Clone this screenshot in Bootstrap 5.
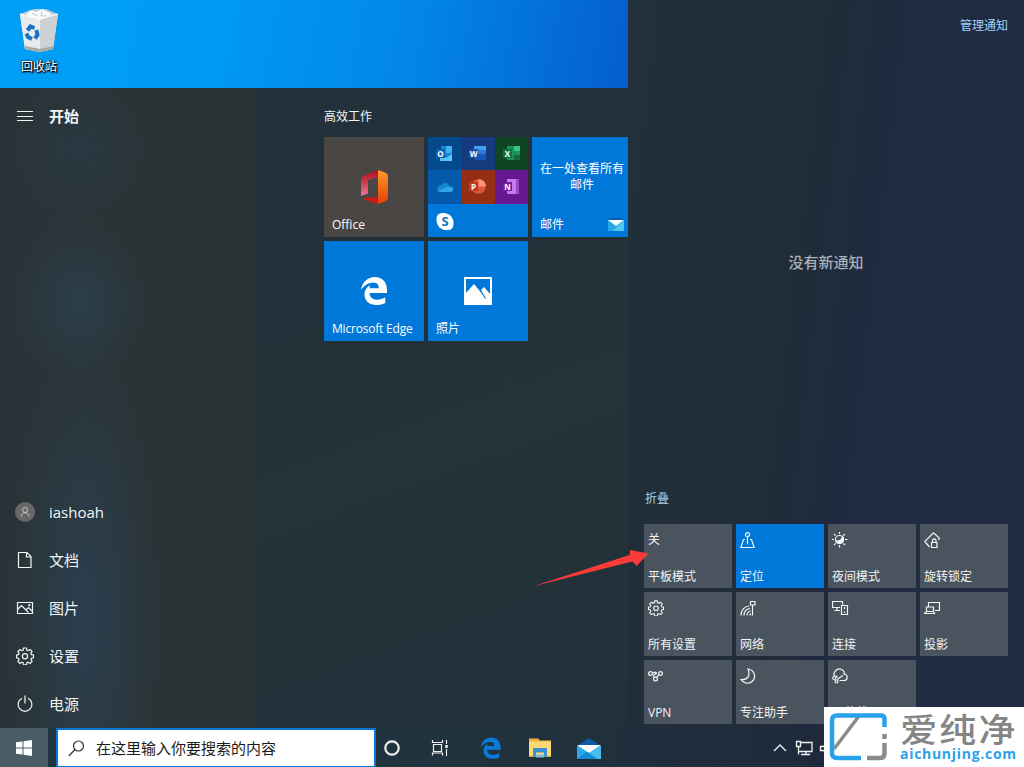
<!DOCTYPE html>
<html lang="zh-CN">

<head>
    <meta charset="UTF-8">
    <meta name="viewport" content="width=device-width, initial-scale=1.0">
    <title>Windows 10 桌面</title>
    <link href="https://cdn.jsdelivr.net/npm/bootstrap@5.3.0/dist/css/bootstrap.min.css" rel="stylesheet">
    <style>
        body {
            width: 1024px;
            height: 767px;
            background-color: #22303a;
            font-family: "Open Sans", "Noto Sans CJK SC", sans-serif;
            font-size: 12px;
            line-height: 16px;
            color: #f2f5f6;
        }

        svg {
            display: block;
            flex-shrink: 0;
        }

        .line-icon {
            fill: none;
            stroke: #f2f5f6;
            stroke-width: 1.2;
        }

        .left-side {
            width: 628px;
        }

        /* Wallpaper */
        .wallpaper {
            height: 88px;
            background: linear-gradient(101deg, #009ff5 0%, #009bf3 32%, #0286e8 65%, #0464d4 94%, #045dcd 100%);
        }

        .desktop-icon {
            width: 78px;
            padding-top: 8px;
        }

        .desktop-icon span {
            margin-top: 6px;
            color: #fff;
            text-shadow: 1px 1px 2px #000, 0 0 2px #000, 1px 1px 1px #000;
        }

        /* Start menu */
        .start-list {
            width: 256px;
            padding-top: 4px;
            font-size: 15px;
            background:
                radial-gradient(ellipse 65px 80px at 80px 215px, rgba(42, 70, 88, .6), rgba(42, 70, 88, 0)),
                radial-gradient(ellipse 75px 280px at 85px 530px, rgba(42, 68, 88, .7), rgba(42, 68, 88, 0)),
                radial-gradient(ellipse 65px 70px at 80px 60px, rgba(38, 62, 76, .5), rgba(38, 62, 76, 0)),
                linear-gradient(90deg, #2a3438, #2b3337 60%, #2b3235);
        }

        .start-row {
            height: 48px;
            padding-left: 16px;
            gap: 15px;
        }

        .start-tiles {
            width: 372px;
            padding: 21px 0 0 68px;
            overflow: hidden;
            background: linear-gradient(160deg, #22303b 0%, #243339 55%, #22303a 100%);
        }

        .tile-grid {
            display: grid;
            grid-template-columns: repeat(3, 100px);
            grid-auto-rows: 100px;
            gap: 4px;
            margin-top: 12px;
        }

        .app-tile {
            position: relative;
            background-color: #0078d9;
            color: #fff;
        }

        .app-tile > .tile-name {
            position: absolute;
            left: 8px;
            bottom: 4px;
            white-space: nowrap;
        }

        .tile-edge > .tile-name {
            letter-spacing: -.2px;
        }

        .tile-office {
            background-color: #494644;
        }

        .tile-icon {
            padding-top: 32px;
        }

        .mail-badge {
            position: absolute;
            left: 76px;
            top: 80px;
        }

        .folder-cells {
            display: grid;
            grid-template-columns: 33px 34px 33px;
            grid-template-rows: 33px 34px 33px;
        }

        .cell-outlook { background-color: #03498c; }
        .cell-word { background-color: #153a7d; }
        .cell-excel { background-color: #0f4425; }
        .cell-onedrive { background-color: #0359ac; }
        .cell-point { background-color: #942f16; }
        .cell-note { background-color: #65188f; }

        .logo-letter {
            font: bold 8px "Open Sans", sans-serif;
            fill: #fff;
            text-anchor: middle;
        }

        /* Action center */
        .action-center {
            width: 396px;
            padding: 18px 16px 4px;
            background: linear-gradient(97deg, #22303a 0%, #202c38 40%, #202a40 58%, #202a42 100%);
        }

        .action-link {
            color: #a3d3f7;
        }

        .no-news {
            margin-top: 220px;
            font-size: 15px;
            font-weight: 500;
            color: #aab0b8;
        }

        .fold-link {
            margin: 221px 0 17px 1px;
        }

        .quick-grid {
            display: grid;
            grid-template-columns: repeat(4, 88px);
            grid-auto-rows: 64px;
            gap: 4px;
        }

        .quick-tile {
            padding: 8px 4px 3px;
            background-color: #4a545f;
        }

        .quick-on {
            background-color: #0078d9;
        }

        /* Taskbar */
        .taskbar {
            height: 39px;
            background: linear-gradient(90deg, #21343f, #20323c 50%, #1e2a3c 80%, #1e2942);
        }

        .start-button {
            width: 48px;
            background-color: #4a5c65;
        }

        .search-box {
            width: 320px;
            margin-left: 8px;
            padding-left: 10px;
            gap: 11px;
            background-color: #fff;
            border: 2px solid #0a74cf;
            border-bottom-width: 1px;
            color: #1b1b1b;
            font-size: 15px;
        }

        .tray-icons {
            padding-left: 160px;
        }

        /* Layers over the desktop */
        .pointer-arrow {
            position: absolute;
            left: 530px;
            top: 545px;
        }

        .site-stamp {
            position: absolute;
            left: 824px;
            top: 707px;
            background-color: #fff;
        }
    </style>
</head>

<body class="position-relative overflow-hidden d-flex flex-column">

    <main class="d-flex flex-grow-1">
        <div class="left-side d-flex flex-column">

            <!-- Desktop -->
            <div class="wallpaper">
                <div class="desktop-icon d-flex flex-column align-items-center">
                    <svg width="40" height="45" viewBox="0 0 40 45">
                        <path d="M1 6 L7 4 L12 2 L18 1 L27 2 L31 4 L39 6 L34 41 L21 44 L6 41Z" fill="#dcdfe1" />
                        <path d="M1 6 L21 11 L21 44 L6 41Z" fill="#e9ebec" />
                        <path d="M21 11 L39 6 L34 41 L21 44Z" fill="#cfd2d4" />
                        <path d="M1 6 L12 2 L27 1 L39 6 L21 11Z" fill="#b8cbd8" />
                        <path d="M7 6 L13 2 L17 4 L23 1 L29 4 L33 6 L29 9 L21 12 L11 9Z" fill="#f8f9f9" />
                        <path d="M13 5 L18 8 M23 3 L22 8 L28 8" fill="none" stroke="#c3c7c9" />
                        <path d="M1 6 L21 11 L39 6" fill="none" stroke="#fff" />
                        <path d="M6 38 L21 41 L34.500 38 L34 41 L21 44 L6.500 41Z" fill="#aaa9a7" />
                        <g fill="none" stroke="#1972c6" stroke-width="4">
                            <path d="M8.500 22.500 L11.500 18.500 L15.500 20" />
                            <path d="M17.500 22 L18.500 27 L16 30.500" />
                            <path d="M13 31 L9 29 L7.500 25.500" />
                        </g>
                    </svg>
                    <span>回收站</span>
                </div>
            </div>

            <!-- Start menu -->
            <div class="d-flex flex-grow-1">
                <nav class="start-list d-flex flex-column">
                    <div class="start-row d-flex align-items-center mb-auto fw-bold">
                        <svg class="line-icon" width="18" height="18" viewBox="0 0 18 18"><path d="M1 4.500h16M1 9.500h16M1 13.500h16" /></svg>
                        <span>开始</span>
                    </div>
                    <div class="start-row d-flex align-items-center">
                        <svg width="18" height="20" viewBox="0 0 18 20" overflow="visible">
                            <circle cx="9" cy="10" r="10" fill="#696767" />
                            <circle cx="9" cy="8" r="2.500" fill="none" stroke="#c6c6c6" />
                            <path d="M5 14.500c0-5 8-5 8 0" fill="none" stroke="#c6c6c6" />
                        </svg>
                        <span>iashoah</span>
                    </div>
                    <div class="start-row d-flex align-items-center">
                        <svg class="line-icon" width="18" height="18" viewBox="0 0 18 18"><path d="M2.500 1.500h8.500l4 4v11h-12.500zM10.500 1.500v4.500h4.500" /></svg>
                        <span>文档</span>
                    </div>
                    <div class="start-row d-flex align-items-center">
                        <svg class="line-icon" width="18" height="18" viewBox="0 0 18 18"><path d="M1.500 3.500h15v11h-15zM1.500 10.500l4-4 7 7M10 11l2.500-2.500 4 4" /><circle cx="13.300" cy="6.200" r=".5" /></svg>
                        <span>图片</span>
                    </div>
                    <div class="start-row d-flex align-items-center">
                        <svg class="line-icon" width="18" height="18" viewBox="0 0 18 18">
                            <path d="M7.500 1h3l.4 2.200 1.300.5 1.900-1.200 2 2-1.200 1.900.5 1.200 2.100.4v2.800l-2.100.5-.5 1.200 1.200 1.900-2 2-1.900-1.200-1.300.5-.4 2.200h-3l-.4-2.200-1.300-.5-1.900 1.200-2-2 1.200-1.900-.5-1.200-2.100-.5v-2.800l2.100-.4.5-1.200-1.200-1.900 2-2 1.900 1.200 1.300-.5z" />
                            <circle cx="9" cy="9.300" r="2.600" />
                        </svg>
                        <span>设置</span>
                    </div>
                    <div class="start-row d-flex align-items-center">
                        <svg class="line-icon" width="18" height="18" viewBox="0 0 18 18"><path d="M6 3.200a6.900 6.900 0 1 0 6 0M9 .5v8" /></svg>
                        <span>电源</span>
                    </div>
                </nav>

                <section class="start-tiles">
                    <div>高效工作</div>
                    <div class="tile-grid">
                        <div class="app-tile tile-office">
                            <div class="tile-icon d-flex justify-content-center">
                                <svg width="28" height="36" viewBox="0 0 28 36">
                                    <defs>
                                        <linearGradient id="officeLeft" x1="0" y1="0" x2="0" y2="1">
                                            <stop offset="0" stop-color="#a80f18" />
                                            <stop offset=".5" stop-color="#cf3f55" />
                                            <stop offset="1" stop-color="#e77aa4" />
                                        </linearGradient>
                                        <linearGradient id="officeRight" x1="0" y1="0" x2="0" y2="1">
                                            <stop offset="0" stop-color="#ff9a2c" />
                                            <stop offset="1" stop-color="#e33e05" />
                                        </linearGradient>
                                    </defs>
                                    <path d="M18 1 L4 6.500 Q1 8 1 12 V27 L8 24.500 V11 L18 8Z" fill="url(#officeLeft)" />
                                    <path d="M5 28 L18 28.500 V35 L15 34.500 L4 30Z" fill="#c91c18" />
                                    <path d="M18 1 L25 3.500 Q28 4.500 28 8 V28 Q28 31 25 32.500 L18 35Z" fill="url(#officeRight)" />
                                </svg>
                            </div>
                            <span class="tile-name">Office</span>
                        </div>

                        <div class="app-tile folder-cells">
                            <svg class="cell-outlook" width="33" height="33" viewBox="0 0 33 33">
                                <path d="M13 9h11v15H13z" fill="#1687d4" /><path d="M18 9h6v7h-6z" fill="#3eb4ee" /><path d="M12 17l6 4 6-4v7H12z" fill="#58c5f5" />
                                <path d="M8 12h9v9H8z" fill="#0c62b4" /><text class="logo-letter" x="12.500" y="19.500">O</text>
                            </svg>
                            <svg class="cell-word" width="34" height="33" viewBox="0 0 34 33">
                                <path d="M13 9h12v4H13z" fill="#44a0ee" /><path d="M13 13h12v4H13z" fill="#2c7bd4" /><path d="M13 17h12v6H13z" fill="#1957b4" />
                                <path d="M8 12h9v9H8z" fill="#1a51a8" /><text class="logo-letter" x="12.500" y="19.500">W</text>
                            </svg>
                            <svg class="cell-excel" width="33" height="33" viewBox="0 0 33 33">
                                <path d="M12 9h13v14H12z" fill="#1b9355" /><path d="M19 9h6v5h-6z" fill="#36c781" /><path d="M19 18h6v5h-6z" fill="#17693d" />
                                <path d="M8 12h9v9H8z" fill="#0d7540" /><text class="logo-letter" x="12.500" y="19.500">X</text>
                            </svg>
                            <svg class="cell-onedrive" width="33" height="34" viewBox="0 0 33 34">
                                <path d="M9 19c0-3 3-4 5-4 2-4 7-2 7 1 3 0 4 1 4 3q0 3-3 3H12q-3 0-3-3z" fill="#1387d3" /><path d="M10 21l9-4q6-1 6 2 0 3-3 3H12z" fill="#2da5e6" />
                            </svg>
                            <svg class="cell-point" width="34" height="34" viewBox="0 0 34 34">
                                <circle cx="17.500" cy="16.500" r="7.300" fill="#dc5836" /><path d="M17.500 16.500V9.200a7.300 7.300 0 0 1 7.300 7.300z" fill="#ff9477" />
                                <path d="M8 12h9v9H8z" fill="#bd3c20" /><text class="logo-letter" x="12.500" y="19.500">P</text>
                            </svg>
                            <svg class="cell-note" width="33" height="34" viewBox="0 0 33 34">
                                <path d="M12 9h12v15H12z" fill="#c67be8" /><path d="M21 9h3v15h-3z" fill="#9d49ca" />
                                <path d="M8 12h9v9H8z" fill="#7b1ca6" /><text class="logo-letter" x="12.500" y="19.500">N</text>
                            </svg>
                            <svg width="33" height="33" viewBox="0 0 33 33">
                                <rect x="8.500" y="9" width="13" height="13" rx="5.500" fill="#fff" /><rect x="12" y="12.500" width="13.500" height="13.500" rx="5.500" fill="#fff" /><circle cx="17" cy="17.500" r="8" fill="#fff" />
                                <text x="17" y="22.300" text-anchor="middle" font-size="13" font-weight="700" fill="#0b75bf">S</text>
                            </svg>
                        </div>

                        <div class="app-tile text-center pt-4">
                            <div>在一处查看所有<br>邮件</div>
                            <span class="tile-name">邮件</span>
                            <svg class="mail-badge" width="16" height="14" viewBox="0 0 16 14">
                                <path d="M0 3h16v11H0z" fill="#25a8e5" /><path d="M0 3h16L8 9z" fill="#f5fbfe" /><path d="M0 3l3-2h10l3 2z" fill="#0d5aa4" /><path d="M16 3v11H5z" fill="#54c7f0" />
                            </svg>
                        </div>

                        <div class="app-tile tile-edge">
                            <div class="d-flex justify-content-center pt-4">
                                <svg class="mt-3" width="28" height="28" viewBox="0 0 28 28" overflow="visible">
                                    <path transform="translate(0 -4)" fill="#fff" d="M1 13C2 5 8 0 15 0c7 0 12 5 12 12.500V16H9.500c.3 4.500 3.500 6.800 7.500 6.800 3.300 0 6-1 8.300-2.500V26c-2.800 1.500-5.800 2-8.800 2-7 0-12-4-12-10.500 0-4.300 2.300-7.500 6-9.300-.7 1-1 2-1.100 3h9.400c0-3.400-1.600-5.400-5.300-5.400C8 5.800 4 8.500 1 13z" />
                                </svg>
                            </div>
                            <span class="tile-name">Microsoft Edge</span>
                        </div>

                        <div class="app-tile">
                            <div class="d-flex justify-content-center pt-4">
                                <svg class="mt-3" width="28" height="28" viewBox="0 0 28 28" overflow="visible">
                                    <g transform="translate(0 -4)"><path d="M1 1h26v26H1z" fill="none" stroke="#fff" stroke-width="2" /><path d="M1 17L10 7l9 11-2-5 3-3 7 8v9H1z" fill="#fff" /><path d="M16.500 13.500l5 8" stroke="#0078d9" stroke-width="1.100" /></g>
                                </svg>
                            </div>
                            <span class="tile-name">照片</span>
                        </div>
                    </div>
                </section>
            </div>
        </div>

        <!-- Action center -->
        <aside class="action-center">
            <div class="action-link text-end">管理通知</div>
            <div class="no-news text-center">没有新通知</div>
            <div class="fold-link action-link">折叠</div>
            <div class="quick-grid">
                <div class="quick-tile d-flex flex-column justify-content-between">
                    <span>关</span>
                    <span>平板模式</span>
                </div>
                <div class="quick-tile quick-on d-flex flex-column justify-content-between">
                    <svg class="line-icon" width="16" height="17" viewBox="0 0 16 17"><circle cx="7.500" cy="2.700" r="2" /><path d="M7.500 4.700v7.500M5 7.500H3.500L.8 15.500h13.400L11.500 7.500H10" /></svg>
                    <span>定位</span>
                </div>
                <div class="quick-tile d-flex flex-column justify-content-between">
                    <svg class="line-icon" width="16" height="16" viewBox="0 0 16 16">
                        <path d="M7.500 0v2M7.500 13v2.500M0 7.500h2M13 7.500h2.500M2 2l1.700 1.700M13 2l-1.700 1.700M2 13l1.700-1.700M13 13l-1.700-1.700" /><circle cx="7.500" cy="7.500" r="4" /><path d="M10.500 4.500a4 4 0 1 1-6.500 4.500c3 .5 6-1 6.500-4.500z" fill="#f2f5f6" />
                    </svg>
                    <span>夜间模式</span>
                </div>
                <div class="quick-tile d-flex flex-column justify-content-between">
                    <svg class="line-icon" width="17" height="17" viewBox="0 0 17 17"><path d="M5.500 15L.8 9.500 9.500.8l6 5.500-1.200 1.700M2.500 11.500l3 3.500" /><path d="M7.500 10.500h5.500v5h-5.500zM8.500 10.500v-2c0-2.300 3.500-2.300 3.500 0v2" /></svg>
                    <span>旋转锁定</span>
                </div>
                <div class="quick-tile d-flex flex-column justify-content-between">
                    <svg class="line-icon" width="16" height="16" viewBox="0 0 18 18">
                        <path d="M7.500 1h3l.4 2.200 1.300.5 1.900-1.200 2 2-1.200 1.900.5 1.200 2.100.4v2.800l-2.100.5-.5 1.200 1.200 1.900-2 2-1.900-1.200-1.300.5-.4 2.200h-3l-.4-2.200-1.300-.5-1.900 1.200-2-2 1.200-1.900-.5-1.200-2.100-.5v-2.800l2.100-.4.5-1.200-1.200-1.900 2-2 1.900 1.200 1.300-.5z" />
                        <circle cx="9" cy="9.300" r="2.600" />
                    </svg>
                    <span>所有设置</span>
                </div>
                <div class="quick-tile d-flex flex-column justify-content-between">
                    <svg class="line-icon" width="17" height="17" viewBox="0 0 17 17"><path d="M1 15.500C1 10 5 6 9.500 6M4 15.500c0-4 2.500-6.500 6-7M7 15.500c0-2.500 1.500-4 3.500-4.500M10 15.500q0-1.500 1-2M12.500 5v10.500M10.500 1.500h4.500v3.500h-4.500z" /></svg>
                    <span>网络</span>
                </div>
                <div class="quick-tile d-flex flex-column justify-content-between">
                    <svg class="line-icon" width="17" height="17" viewBox="0 0 17 17"><path d="M8 7.500H.5v-6h10v3M5 7.500v3M2.500 10.500H8M9.500 5.500h6v9h-6zM12.500 7v2M12.500 11.500v1.500" /></svg>
                    <span>连接</span>
                </div>
                <div class="quick-tile d-flex flex-column justify-content-between">
                    <svg class="line-icon" width="17" height="17" viewBox="0 0 17 17"><path d="M4.500 6.500v-4h11v8H11M2.500 7h7v4.500h-7zM2.500 11.500l-2 2h10l-1-2" /></svg>
                    <span>投影</span>
                </div>
                <div class="quick-tile d-flex flex-column justify-content-between">
                    <svg class="line-icon" width="16" height="16" viewBox="0 0 16 16"><circle cx="2.500" cy="5.500" r="1.900" /><circle cx="12.500" cy="5.500" r="1.900" /><circle cx="7.500" cy="11" r="1.900" /><path d="M4.400 5.500L7 4l1.500 2.500M5 7l1.500 2.300M8.500 9.300l2.500-2.500M6 7l3-2.500" /></svg>
                    <span>VPN</span>
                </div>
                <div class="quick-tile d-flex flex-column justify-content-between">
                    <svg class="line-icon" width="17" height="17" viewBox="0 0 17 17"><path d="M8 1c7 1 8.500 9 4 12.500-3.500 3-8.500 2-11-2C8 12.500 10.500 7 8 1z" /></svg>
                    <span>专注助手</span>
                </div>
                <div class="quick-tile d-flex flex-column justify-content-between">
                    <svg class="line-icon" width="17" height="17" viewBox="0 0 17 17"><path d="M2.500 8.500c-2-4 2.500-9 7-7 3 1 3 4 2.500 4.500 4.500.5 4 6.500 0 6.500H7.500M5 11.500l6-4M5.500 9.500l-2-2" /><circle cx="2.200" cy="10" r="1.500" /><circle cx="4.500" cy="13.500" r="1.500" /></svg>
                    <span>屏幕截图</span>
                </div>
            </div>
        </aside>
    </main>

    <!-- Taskbar -->
    <footer class="taskbar d-flex">
        <div class="start-button d-flex align-items-center justify-content-center">
            <svg width="16" height="16" viewBox="0 0 16 16"><path fill="#fff" d="M0 2.300l6.500-.9v6.100H0zM7.500 1.200L16 0v7.500H7.500zM0 8.500h6.500v6.100L0 13.700zM7.500 8.500H16V16l-8.500-1.200z" /></svg>
        </div>
        <div class="search-box d-flex align-items-center">
            <svg width="17" height="17" viewBox="0 0 17 17" fill="none" stroke="#333" stroke-width="1.200"><circle cx="10.500" cy="6" r="5" /><path d="M7 9.500L.8 16" /></svg>
            <span>在这里输入你要搜索的内容</span>
        </div>
        <div class="d-flex">
            <svg width="40" height="39" viewBox="0 0 40 39"><circle cx="16" cy="20" r="6.700" fill="none" stroke="#eef1f2" stroke-width="2.200" /></svg>
            <svg width="48" height="39" viewBox="0 0 48 39" fill="none" stroke="#eef1f2" stroke-width="1.200"><path d="M16.500 12v2.500h10V12M17.500 16.500h8v7h-8zM16.500 27.500v-2.500h10v2.500M30.500 12v4M30.500 21v7" /><path d="M30.500 17v3" stroke-width="2.500" /></svg>
            <svg width="54" height="39" viewBox="0 0 54 39"><path transform="translate(16 9.500) scale(.76)" fill="#0b7add" d="M1 13C2 5 8 0 15 0c7 0 12 5 12 12.500V16H9.500c.3 4.500 3.500 6.800 7.500 6.800 3.300 0 6-1 8.300-2.500V26c-2.800 1.500-5.800 2-8.800 2-7 0-12-4-12-10.500 0-4.300 2.300-7.500 6-9.300-.7 1-1 2-1.100 3h9.400c0-3.400-1.600-5.400-5.300-5.400C8 5.800 4 8.500 1 13z" /></svg>
            <svg width="44" height="39" viewBox="0 0 44 39">
                <path d="M11 10.500h9l2 2h11v16H11z" fill="#edb63d" /><path d="M11 13.500h22v15H11z" fill="#fcd974" /><path d="M15 20h14v8.500h-3v-4h-8v4h-3z" fill="#3793d3" /><path d="M18 26.500h8v3h-8z" fill="#79bce5" />
            </svg>
            <svg width="48" height="39" viewBox="0 0 48 39">
                <path d="M15 18l12-8 12 8v13H15z" fill="#0f5aa7" /><path d="M15 18h24v13H15z" fill="#2aa9ea" /><path d="M15 17h24l-12 8z" fill="#fff" /><path d="M39 18v13H18l9-6z" fill="#49bdf0" /><path d="M15 31h21L25 23.700z" fill="#168bd8" />
            </svg>
        </div>
        <div class="tray-icons d-flex">
            <svg width="60" height="39" viewBox="0 0 60 39" fill="none" stroke="#eef1f2" stroke-width="1.300"><path d="M4 23l6-6 6 6M30 14.500h12v9H29M26.500 13.500h4v5h-4zM28.500 18.500v8M36 23.500v3M31 26.500h9M50.500 18.500h3l4-4v12l-4-4h-3z" /></svg>
        </div>
    </footer>

    <svg class="pointer-arrow" width="122" height="45" viewBox="0 0 122 45"><path d="M2.500 41.500L99.500 10l.5-5 18.500 3.500-12 12.500-4-4.500z" fill="#f93b39" /></svg>

    <div class="site-stamp">
        <svg width="200" height="60" viewBox="0 0 200 60">
            <g fill="none" stroke-width="4.500">
                <path d="M35 9L10 42" stroke="#8b8b8b" stroke-width="3.500" />
                <path d="M60.500 20v-8q0-3.500-3.500-3.500H13q-5 0-5 5V46q0 5 5 5h24" stroke="#2aa1e8" />
                <path d="M43 51h13q4.500 0 4.500-4.500V36M60.500 27v5" stroke="#8b8b8b" />
            </g>
            <text transform="scale(1.12 1)" x="68" y="35" font-size="33" font-weight="500" textLength="103" fill="#858585">爱纯净</text>
            <text x="76" y="52" font-size="14" font-weight="700" textLength="116" fill="#2aa1e8">aichunjing.com</text>
        </svg>
    </div>

    <script src="https://cdn.jsdelivr.net/npm/bootstrap@5.3.0/dist/js/bootstrap.bundle.min.js"></script>
</body>

</html>
